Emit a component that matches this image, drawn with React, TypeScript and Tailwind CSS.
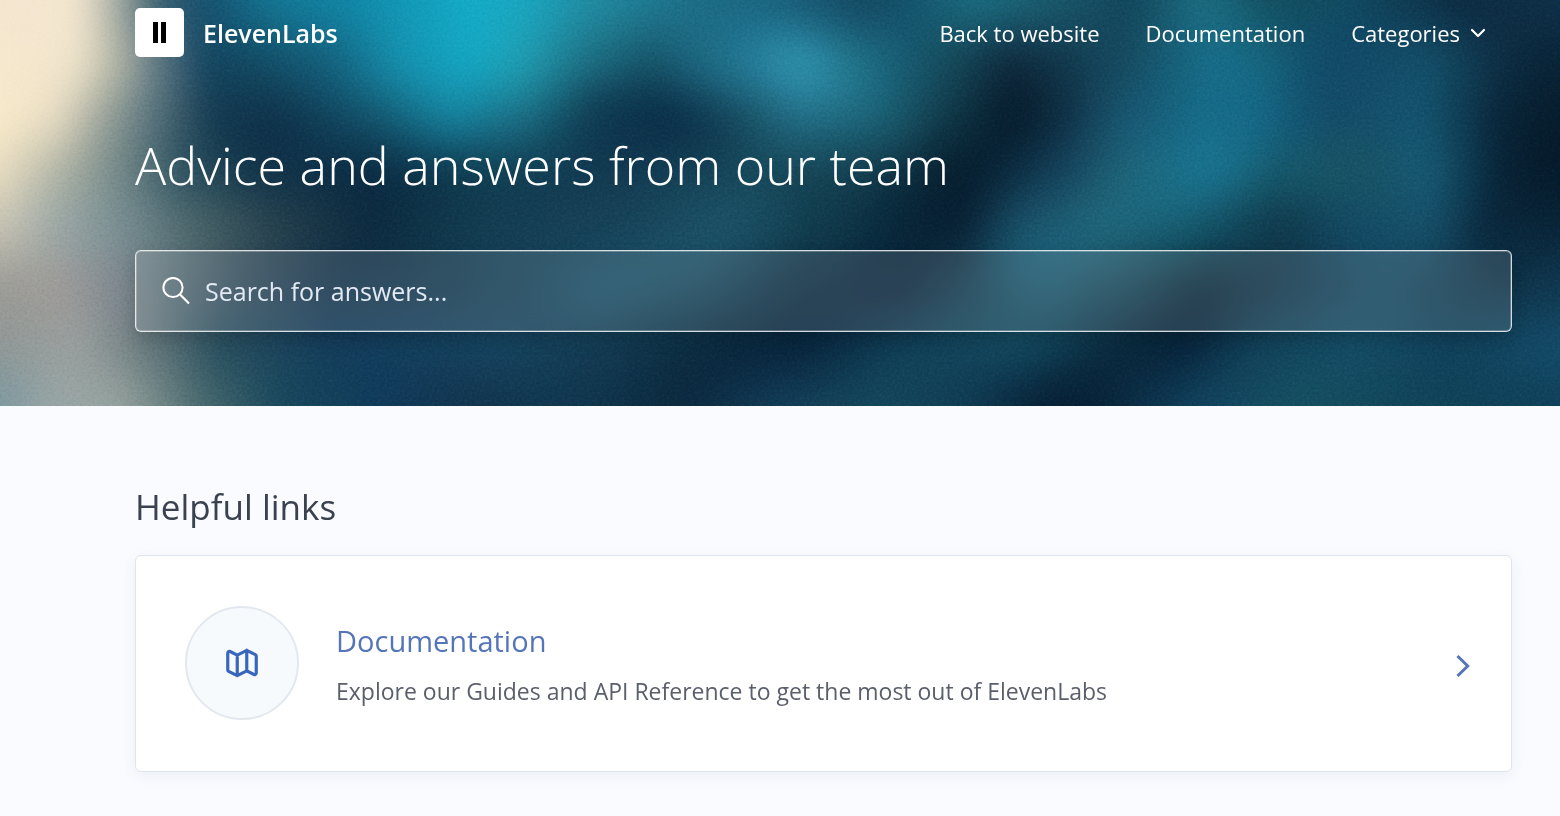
import { ChevronDown } from "lucide-react";

type Stop = [number, string];

// Colour rows of the hero backdrop: vertical centre, then stops along a 1560 wide canvas
const rows: { y: number; stops: Stop[] }[] = [
  { y: 0, stops: [[0, "#f5e6d0"], [78, "#f3e7d0"], [122, "#9ca59e"], [155, "#3c6070"], [205, "#15506e"], [270, "#147694"], [350, "#1188a8"], [470, "#14acc8"], [525, "#1aa6c0"], [600, "#218aa0"], [700, "#1c6c86"], [770, "#1a6480"], [860, "#13465f"], [900, "#125068"], [980, "#1c6e82"], [1050, "#1a5a6e"], [1130, "#12445a"], [1200, "#1d6e82"], [1260, "#145060"], [1350, "#104a62"], [1460, "#0c2a40"], [1550, "#0e3048"]] },
  { y: 65, stops: [[0, "#f7e8cf"], [75, "#f1e5cc"], [115, "#b8baa8"], [155, "#687e88"], [205, "#134460"], [250, "#134860"], [330, "#14607c"], [400, "#1592b0"], [470, "#13a8c4"], [520, "#20a0b4"], [580, "#1f7488"], [650, "#175468"], [740, "#237a96"], [800, "#2f94b0"], [850, "#22788e"], [900, "#185e76"], [960, "#144454"], [1010, "#10283c"], [1060, "#12364a"], [1130, "#164c62"], [1210, "#176e8a"], [1270, "#156078"], [1330, "#114868"], [1430, "#14506a"], [1500, "#0e2e44"], [1550, "#0a2438"]] },
  { y: 120, stops: [[0, "#f9ebcb"], [55, "#eadec4"], [105, "#969f98"], [155, "#54707a"], [215, "#11364c"], [280, "#0e2f48"], [380, "#14566e"], [450, "#1784a0"], [520, "#1b6e84"], [590, "#103c52"], [665, "#0a2c46"], [740, "#184c60"], [800, "#226e86"], [880, "#1c6478"], [940, "#123c4c"], [1010, "#061c2b"], [1060, "#0f2c40"], [1120, "#185470"], [1200, "#166c88"], [1260, "#146484"], [1330, "#144a66"], [1420, "#145470"], [1500, "#0a2438"], [1550, "#071e2e"]] },
  { y: 170, stops: [[0, "#eadec2"], [55, "#b2b6a6"], [125, "#6c8284"], [180, "#2c5260"], [250, "#10344a"], [370, "#0a2a42"], [500, "#103c50"], [620, "#113850"], [740, "#184a5c"], [860, "#133e4e"], [960, "#061c2c"], [1060, "#14425c"], [1120, "#1f6478"], [1210, "#1a7692"], [1280, "#175a6c"], [1360, "#185464"], [1430, "#165a74"], [1500, "#092438"], [1550, "#051a2a"]] },
  { y: 225, stops: [[0, "#c8c4b4"], [60, "#98a6a6"], [130, "#758b90"], [200, "#4a6468"], [280, "#26404c"], [370, "#0c293e"], [470, "#123c50"], [600, "#184258"], [720, "#1c5064"], [820, "#103c4c"], [900, "#08263a"], [960, "#0a2236"], [1020, "#1a5068"], [1100, "#226274"], [1180, "#175c70"], [1280, "#0f3648"], [1350, "#134a64"], [1430, "#17506a"], [1490, "#0b2a40"], [1550, "#0a2438"]] },
  { y: 290, stops: [[0, "#9a9a96"], [60, "#9f9b98"], [110, "#858c92"], [160, "#5f737a"], [240, "#30495a"], [330, "#102f48"], [450, "#12364c"], [600, "#164a62"], [700, "#15455a"], [800, "#0c2a40"], [900, "#0a2238"], [970, "#123c50"], [1050, "#19546a"], [1130, "#144254"], [1200, "#092636"], [1290, "#10344a"], [1380, "#13455e"], [1500, "#0e3044"], [1550, "#0f3850"]] },
  { y: 345, stops: [[0, "#909896"], [80, "#9aa09f"], [150, "#64767a"], [220, "#244c5c"], [340, "#123c5c"], [500, "#164460"], [620, "#13384e"], [720, "#0a283c"], [800, "#07243a"], [900, "#114058"], [1020, "#134a60"], [1110, "#0c2e42"], [1180, "#07223a"], [1250, "#114058"], [1350, "#144e66"], [1450, "#10405a"], [1550, "#144c6a"]] },
  { y: 405, stops: [[0, "#7c98a0"], [50, "#98a6a6"], [120, "#98a4a0"], [200, "#4c6c70"], [280, "#18485c"], [380, "#103a5a"], [470, "#12344e"], [560, "#103850"], [680, "#0c2a40"], [780, "#143e5a"], [880, "#14485c"], [960, "#103c54"], [1040, "#082238"], [1090, "#082036"], [1200, "#124460"], [1300, "#165062"], [1400, "#11455a"], [1540, "#0f4058"]] },
];

function HeroBackdrop() {
  return (
    <svg
      className="absolute inset-0 h-full w-full"
      viewBox="0 0 1560 406"
      preserveAspectRatio="none"
      aria-hidden="true"
    >
      <defs>
        {rows.map((row, i) => (
          <linearGradient key={row.y} id={`row-${i}`} gradientUnits="userSpaceOnUse" x1="0" y1="0" x2="1560" y2="0">
            {row.stops.map(([x, color]) => (
              <stop key={x} offset={x / 1560} stopColor={color} />
            ))}
          </linearGradient>
        ))}
        <filter id="soften" filterUnits="userSpaceOnUse" x="-120" y="-120" width="1800" height="646" colorInterpolationFilters="sRGB">
          <feGaussianBlur stdDeviation="14 24" />
        </filter>
        <filter id="streak" filterUnits="userSpaceOnUse" x="-120" y="-120" width="1800" height="646" colorInterpolationFilters="sRGB">
          <feGaussianBlur stdDeviation="20" />
        </filter>
        <filter id="grain" x="0" y="0" width="100%" height="100%" colorInterpolationFilters="sRGB">
          <feTurbulence type="fractalNoise" baseFrequency="0.4" numOctaves="2" seed="4" />
          <feColorMatrix type="saturate" values="0" />
          <feComponentTransfer>
            <feFuncA type="linear" slope="0" intercept="1" />
          </feComponentTransfer>
        </filter>
      </defs>
      <g filter="url(#soften)">
        {rows.map((row, i) => {
          const top = i === 0 ? -120 : (rows[i - 1].y + row.y) / 2;
          const bottom = i === rows.length - 1 ? 526 : (row.y + rows[i + 1].y) / 2;
          return <rect key={row.y} x="-120" y={top} width="1800" height={bottom - top + 1} fill={`url(#row-${i})`} />;
        })}
      </g>
      <g filter="url(#streak)" fill="none" strokeLinecap="round">
        <path d="M780 60 L840 90" stroke="#35a0bc" strokeOpacity="0.2" strokeWidth="36" />
        <path d="M600 110 Q670 90 720 150" stroke="#08263e" strokeOpacity="0.3" strokeWidth="40" />
        <path d="M1026 90 Q1000 170 930 230" stroke="#04182a" strokeOpacity="0.4" strokeWidth="36" />
        <path d="M900 285 Q800 335 680 380" stroke="#05203a" strokeOpacity="0.3" strokeWidth="30" />
        <path d="M1220 300 Q1140 350 1050 400" stroke="#041c30" strokeOpacity="0.4" strokeWidth="30" />
        <path d="M1235 20 Q1275 150 1170 195 T1010 265" stroke="#1b7896" strokeOpacity="0.3" strokeWidth="40" />
        <path d="M1560 90 Q1530 190 1480 235" stroke="#041828" strokeOpacity="0.25" strokeWidth="34" />
        <path d="M760 215 Q680 260 580 300" stroke="#1f5a72" strokeOpacity="0.4" strokeWidth="34" />
      </g>
      <rect width="1560" height="406" filter="url(#grain)" opacity="0.22" className="mix-blend-soft-light" />
    </svg>
  );
}

function SearchIcon() {
  return (
    <svg className="h-7 w-7 shrink-0" viewBox="0 0 28 28" fill="none" stroke="#fff" strokeWidth="2" aria-hidden="true">
      <circle cx="11" cy="10.5" r="9.6" />
      <path d="M17.8 17.3 27 26.5" strokeWidth="2.2" />
    </svg>
  );
}

function MapIcon() {
  return (
    <svg
      className="h-[38px] w-[38px]"
      viewBox="0 0 24 24"
      fill="none"
      stroke="currentColor"
      strokeWidth="2"
      strokeLinecap="round"
      strokeLinejoin="round"
      aria-hidden="true"
    >
      <path d="M9 20l-5.447-2.724A1 1 0 013 16.382V5.618a1 1 0 011.447-.894L9 7m0 13l6-3m-6 3V7m6 10l4.553 2.276A1 1 0 0021 18.382V7.618a1 1 0 00-.553-.894L15 4m0 13V4m0 0L9 7" />
    </svg>
  );
}

function ArrowIcon() {
  return (
    <svg className="mt-1.5 h-6 w-4 shrink-0" viewBox="0 0 16 24" fill="none" stroke="#5575b8" strokeWidth="3" aria-hidden="true">
      <path d="M2.5 2 12.7 12 2.5 22" />
    </svg>
  );
}

export default function App() {
  return (
    <div className="min-h-screen bg-[#fafbff] font-['Segoe_UI','Open_Sans',sans-serif]">
      <header className="relative overflow-hidden bg-[#0f3a52] pr-12 pb-[74px] pl-[135px] text-white">
        <HeroBackdrop />
        <div className="relative">
          <div className="flex items-center justify-between pt-2 pr-[22px]">
            <a href="#" className="flex items-center gap-[19px]">
              <span className="flex h-[49px] w-[49px] items-center justify-center gap-[3px] rounded-[5px] bg-white">
                <span className="h-[21px] w-[5px] bg-black" />
                <span className="h-[21px] w-[5px] bg-black" />
              </span>
              <span className="text-[25px] leading-8 font-semibold">ElevenLabs</span>
            </a>
            <nav className="flex items-center gap-[46px] text-[22px] leading-8">
              <a href="#">Back to website</a>
              <a href="#">Documentation</a>
              <button type="button" className="flex items-center gap-1.5">
                Categories
                <ChevronDown className="h-6 w-6" strokeWidth={2.2} />
              </button>
            </nav>
          </div>
          <h1 className="pt-[72px] text-[52px] leading-[72px] font-light">Advice and answers from our team</h1>
          <form className="mt-[49px] flex h-[82px] items-center gap-[15px] rounded-md border border-white/80 bg-white/13 px-[26px] shadow-[inset_0_0_0_1px_rgba(255,255,255,0.25),0_8px_16px_rgba(0,0,0,0.15)] backdrop-blur-sm">
            <SearchIcon />
            <input
              type="text"
              aria-label="Search for answers"
              placeholder="Search for answers..."
              className="w-full bg-transparent text-[25px] leading-10 outline-none placeholder:text-[#e2eaf4]"
            />
          </form>
        </div>
      </header>

      <main className="pt-[73px] pr-12 pb-11 pl-[135px]">
        <h2 className="text-[35px] leading-[56px] text-[#3a4250]">Helpful links</h2>
        <a
          href="#"
          className="mt-5 flex items-center rounded-md border border-[#dfe5ef] bg-white pt-[50px] pr-[40px] pb-[51px] pl-[49px] shadow-[0_4px_14px_rgba(60,80,120,0.07)]"
        >
          <span className="flex h-[114px] w-[114px] shrink-0 items-center justify-center rounded-full border-2 border-[#e3e8ef] bg-[#f7fafd] text-[#3866ba]">
            <MapIcon />
          </span>
          <span className="ml-[37px] flex flex-1 flex-col gap-3 pt-1">
            <span className="text-[29px] leading-10 text-[#5575b8]">Documentation</span>
            <span className="text-[23px] leading-9 text-[#5a5f6b]">
              Explore our Guides and API Reference to get the most out of ElevenLabs
            </span>
          </span>
          <ArrowIcon />
        </a>
      </main>
    </div>
  );
}
